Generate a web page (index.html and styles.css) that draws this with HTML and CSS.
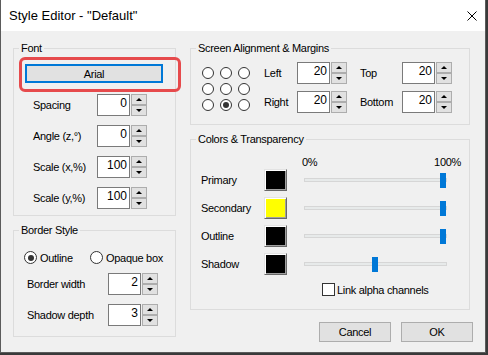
FILE: index.html
```html
<!DOCTYPE html>
<html>
<head>
<link rel="stylesheet" href="styles.css">
</head>
<body>

<div class="window">
  <div class="titlebar">
    <span class="title">Style Editor - "Default"</span>
    <svg class="close" width="10" height="10" viewBox="0 0 10 10"><path d="M0.5 0.5L9.5 9.5M9.5 0.5L0.5 9.5" stroke="#000" stroke-width="1"/></svg>
  </div>

  <div class="client">

    <div class="col col-left">
      <fieldset class="group font-group">
        <legend>Font</legend>
        <div class="highlight"><button class="font-btn">Arial</button></div>
        <div class="fields font-fields">
          <span>Spacing</span>
          <div class="spinbox"><span class="num">0</span><span class="spin"><span class="up"></span><span class="dn"></span></span></div>
          <span>Angle (z,°)</span>
          <div class="spinbox"><span class="num">0</span><span class="spin"><span class="up"></span><span class="dn"></span></span></div>
          <span>Scale (x,%)</span>
          <div class="spinbox"><span class="num">100</span><span class="spin"><span class="up"></span><span class="dn"></span></span></div>
          <span>Scale (y,%)</span>
          <div class="spinbox"><span class="num">100</span><span class="spin"><span class="up"></span><span class="dn"></span></span></div>
        </div>
      </fieldset>

      <fieldset class="group border-group">
        <legend>Border Style</legend>
        <div class="radios">
          <label class="radio-opt first"><span class="radio checked"></span>Outline</label>
          <label class="radio-opt"><span class="radio"></span>Opaque box</label>
        </div>
        <div class="fields border-fields">
          <span>Border width</span>
          <div class="spinbox"><span class="num">2</span><span class="spin"><span class="up"></span><span class="dn"></span></span></div>
          <span>Shadow depth</span>
          <div class="spinbox"><span class="num">3</span><span class="spin"><span class="up"></span><span class="dn"></span></span></div>
        </div>
      </fieldset>
    </div>

    <div class="col col-right">
      <fieldset class="group align-group">
        <legend>Screen Alignment &amp; Margins</legend>
        <div class="align-body">
          <div class="align-grid">
            <span class="radio"></span><span class="radio"></span><span class="radio"></span>
            <span class="radio"></span><span class="radio"></span><span class="radio"></span>
            <span class="radio"></span><span class="radio checked"></span><span class="radio"></span>
          </div>
          <div class="margins">
            <span>Left</span>
            <div class="spinbox"><span class="num">20</span><span class="spin"><span class="up"></span><span class="dn"></span></span></div>
            <span>Top</span>
            <div class="spinbox"><span class="num">20</span><span class="spin"><span class="up"></span><span class="dn"></span></span></div>
            <span>Right</span>
            <div class="spinbox"><span class="num">20</span><span class="spin"><span class="up"></span><span class="dn"></span></span></div>
            <span>Bottom</span>
            <div class="spinbox"><span class="num">20</span><span class="spin"><span class="up"></span><span class="dn"></span></span></div>
          </div>
        </div>
      </fieldset>

      <fieldset class="group colors-group">
        <legend>Colors &amp; Transparency</legend>
        <div class="scale-head"><span>0%</span><span>100%</span></div>
        <div class="color-rows">
          <div class="color-row">
            <span class="color-label">Primary</span>
            <span class="swatch black"></span>
            <div class="slider"><div class="track"></div><div class="thumb" style="left:136px"></div></div>
          </div>
          <div class="color-row">
            <span class="color-label">Secondary</span>
            <span class="swatch yellow"></span>
            <div class="slider"><div class="track"></div><div class="thumb" style="left:136px"></div></div>
          </div>
          <div class="color-row">
            <span class="color-label">Outline</span>
            <span class="swatch black"></span>
            <div class="slider"><div class="track"></div><div class="thumb" style="left:136px"></div></div>
          </div>
          <div class="color-row">
            <span class="color-label">Shadow</span>
            <span class="swatch black"></span>
            <div class="slider"><div class="track"></div><div class="thumb" style="left:68px"></div></div>
          </div>
        </div>
        <label class="check-row"><span class="checkbox"></span>Link alpha channels</label>
      </fieldset>

      <div class="buttons">
        <button class="btn">Cancel</button>
        <button class="btn">OK</button>
      </div>
    </div>

  </div>
</div>

</body>
</html>
```

FILE: styles.css
```css
body {
  margin: 0;
  background: #3a3a3a;
  font-family: "Liberation Sans", Arial, sans-serif;
  font-size: 11px;
  letter-spacing: -0.3px;
  color: #000;
}

.window {
  width: 486px;
  height: 353px;
  box-sizing: border-box;
  border: 1px solid #5b5b5b;
  border-top: none;
  background: #f0f0f0;
  display: flex;
  flex-direction: column;
}

/* title bar */
.titlebar {
  height: 31px;
  flex: none;
  background: #fff;
  display: flex;
  align-items: center;
  justify-content: space-between;
  padding: 0 8px;
}

.title {
  font-size: 13px;
  line-height: 31px;
  letter-spacing: 0;
}

.close {
  display: block;
}

/* client area */
.client {
  flex: 1;
  display: flex;
  gap: 14px;
  padding: 11px 0 0 12px;
}

.col {
  display: flex;
  flex-direction: column;
}

.col-left {
  width: 163px;
}

.col-right {
  width: 280px;
}

.group {
  margin: 0;
  padding: 0;
  border: 1px solid #dcdcdc;
  min-width: 0;
  box-sizing: border-box;
}

.group legend {
  margin-left: 5px;
  padding: 0 2px;
  line-height: 13px;
}

/* font group */
.font-group {
  padding-bottom: 6px;
}

.highlight {
  margin: 2px 0 0 5px;
  width: 162px;
  height: 35px;
  box-sizing: border-box;
  border: 3px solid #e64a4c;
  border-radius: 6px;
  padding: 4px 0 0 3px;
}

.font-btn {
  display: block;
  width: 138px;
  height: 19px;
  margin: 0;
  padding: 0;
  border: 2px solid #0078d7;
  background: #e1e1e1;
  font: inherit;
  letter-spacing: inherit;
  color: #000;
}

.fields {
  display: grid;
  align-items: center;
  row-gap: 9px;
}

.font-fields {
  grid-template-columns: 64px auto;
  margin: 2px 0 0 19px;
}

/* spin boxes */
.spinbox {
  display: flex;
  gap: 1px;
}

.num {
  width: 33px;
  height: 22px;
  box-sizing: border-box;
  border: 1px solid #7a7a7a;
  background: #fff;
  text-align: right;
  padding: 0 2px 0 0;
  font-size: 12px;
  line-height: 16px;
  letter-spacing: 0;
}

.spin {
  display: flex;
  flex-direction: column;
  width: 16px;
}

.spin span {
  height: 11px;
  box-sizing: border-box;
  border: 1px solid #adadad;
  background: #e1e1e1;
  display: flex;
  align-items: center;
  justify-content: center;
}

.spin .up::before {
  content: "";
  border: 3px solid transparent;
  border-top: 0;
  border-bottom: 3px solid #000;
}

.spin .dn::before {
  content: "";
  border: 3px solid transparent;
  border-bottom: 0;
  border-top: 3px solid #000;
}

/* radios */
.radio {
  width: 12px;
  height: 12px;
  box-sizing: border-box;
  border: 1px solid #333;
  border-radius: 50%;
  background: #fff;
  display: flex;
  align-items: center;
  justify-content: center;
}

.radio.checked::before {
  content: "";
  width: 6px;
  height: 6px;
  border-radius: 50%;
  background: #333;
}

.border-group {
  margin-top: 8px;
  padding-bottom: 10px;
}

.radios {
  display: flex;
  align-items: center;
  margin: 14px 0 0 10px;
}

.radio-opt {
  display: flex;
  align-items: center;
  gap: 3px;
}

.radio-opt .radio {
  width: 13px;
  height: 13px;
}

.radio-opt.first {
  width: 66px;
}

.border-fields {
  grid-template-columns: 81px auto;
  margin: 9px 0 0 13px;
}

/* screen alignment */
.align-body {
  display: flex;
  align-items: flex-start;
  padding: 0 0 11px 11px;
}

.align-grid {
  display: grid;
  grid-template-columns: repeat(3, 12px);
  column-gap: 6px;
  row-gap: 4px;
  margin-top: 12px;
}

.margins {
  display: grid;
  grid-template-columns: 33px 63px 42px 50px;
  align-items: center;
  row-gap: 7px;
  margin: 7px 0 0 14px;
}

/* colors */
.colors-group {
  margin-top: 8px;
  padding-bottom: 13px;
}

.scale-head {
  display: flex;
  justify-content: space-between;
  margin: 10px 8px 0 111px;
  line-height: 13px;
}

.color-rows {
  display: flex;
  flex-direction: column;
  gap: 6px;
  padding-left: 10px;
}

.color-row {
  display: flex;
  align-items: center;
  height: 22px;
}

.color-label {
  width: 63px;
}

.swatch {
  width: 23px;
  height: 22px;
  box-sizing: border-box;
  border: 1px solid;
  border-color: #e3e3e3 #696969 #696969 #e3e3e3;
  box-shadow: inset 1px 1px #fff, inset -1px -1px #a0a0a0;
}

.black {
  background: #000;
}

.yellow {
  background: #ffff00;
}

.slider {
  position: relative;
  width: 143px;
  height: 15px;
  margin-left: 17px;
  display: flex;
  align-items: center;
}

.track {
  width: 100%;
  height: 4px;
  box-sizing: border-box;
  border: 1px solid #d6d6d6;
  background: #e7eaea;
}

.thumb {
  position: absolute;
  top: 0;
  width: 6px;
  height: 15px;
  background: #0078d7;
}

.check-row {
  display: flex;
  align-items: center;
  gap: 2px;
  margin: 8px 0 0 131px;
}

.checkbox {
  width: 13px;
  height: 13px;
  box-sizing: border-box;
  border: 1px solid #333;
  background: #fff;
}

/* dialog buttons */
.buttons {
  display: flex;
  justify-content: flex-end;
  gap: 10px;
  margin: 12px -3px 0 0;
}

.btn {
  width: 72px;
  height: 20px;
  margin: 0;
  padding: 0;
  border: 1px solid #adadad;
  background: #e1e1e1;
  font: inherit;
  letter-spacing: inherit;
  color: #000;
}
```
